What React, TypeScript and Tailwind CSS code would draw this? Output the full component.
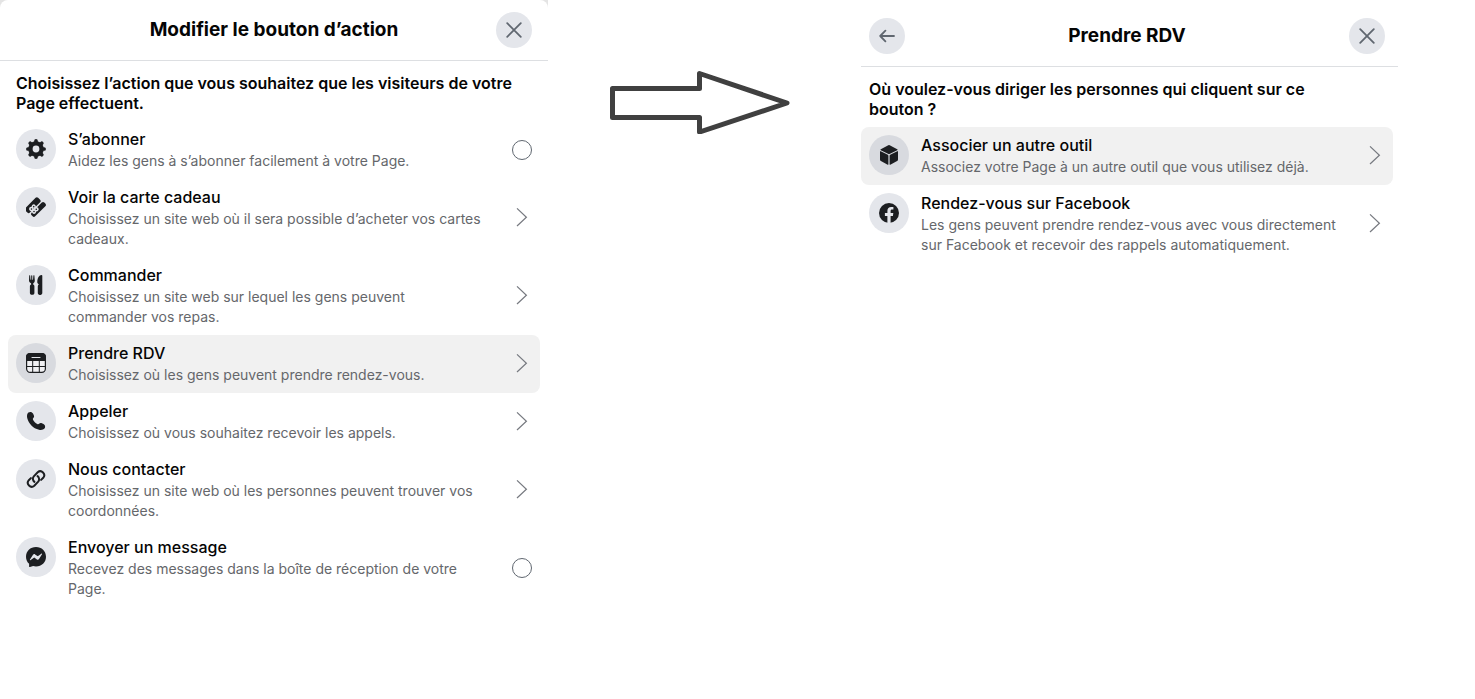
import { useState, type ReactNode } from "react";

type Item = {
  title: string;
  text: string;
  icon: ReactNode;
  kind: "radio" | "link";
  active?: boolean;
};

const GearIcon = () => (
  <svg width="20" height="20" viewBox="0 0 20 20" fill="none" stroke="currentColor" aria-hidden="true">
    <circle cx="10" cy="10" r="5.6" strokeWidth="4.4" />
    <path
      d="M10 1.9v2M10 16.1v2M1.9 10h2M16.1 10h2M4.2 4.2l1.4 1.4M14.4 14.4l1.4 1.4M4.2 15.8l1.4-1.4M14.4 5.6l1.4-1.4"
      strokeWidth="3.7"
      strokeLinecap="round"
    />
  </svg>
);

const GiftCardIcon = () => (
  <svg width="20" height="20" viewBox="0 0 20 20" aria-hidden="true">
    <g transform="rotate(-45 10 10)" fill="currentColor">
      <rect x="0" y="3.2" width="18" height="6.4" rx="1.8" />
      <rect x="1" y="11" width="18" height="5" rx="1.8" />
      <g className="fill-[#e4e6eb]">
        <circle cx="5.2" cy="8" r="2.1" />
        <circle cx="8.8" cy="8" r="2.1" />
        <circle cx="5.2" cy="12" r="2.1" />
        <circle cx="8.8" cy="12" r="2.1" />
      </g>
      <circle cx="5.4" cy="8.2" r=".8" />
      <circle cx="8.6" cy="8.2" r=".8" />
      <circle cx="5.4" cy="11.8" r=".8" />
      <circle cx="8.6" cy="11.8" r=".8" />
    </g>
  </svg>
);

const CutleryIcon = () => (
  <svg width="20" height="20" viewBox="0 0 20 20" fill="currentColor" aria-hidden="true">
    <path d="M3.2.8c0-.6 1-.6 1 0l.3 3.9h.7V.7c0-.7 1.1-.7 1.1 0v4H7L7.4.8c0-.6 1-.6 1 0l.4 4.7c0 1.5-.7 2.2-1.5 2.7l-.2 1.2c1 .4 1.3 1 1.3 1.9v6.6c0 1.1-.8 1.9-1.9 1.9h-.7c-1.1 0-1.9-.8-1.9-1.9v-6.6c0-.9.4-1.5 1.3-1.9L5 8.2C4 7.7 3.1 7 3 5.5z" />
    <path d="M15.6 0c.4 0 .7.3.7.7v17.4c0 1.1-.8 1.9-1.9 1.9h-.7c-1.1 0-1.9-.8-1.9-1.9v-6.6c0-.8.3-1.5 1-1.9l-.9-1c-.5-.5-.6-1-.6-1.7C11.4 3 13.1 0 15.6 0z" />
  </svg>
);

const CalendarIcon = () => (
  <svg width="20" height="20" viewBox="0 0 20 20" fill="none" aria-hidden="true">
    <rect x=".6" y=".6" width="18.8" height="18.8" rx="3.6" className="fill-[#f0f0f3]" stroke="currentColor" strokeWidth="1.2" />
    <path d="M4 0h12a4 4 0 0 1 4 4v4H0V4a4 4 0 0 1 4-4z" fill="currentColor" />
    <path d="M6 4.5h8" className="stroke-[#e4e6eb]" strokeWidth="1.1" strokeLinecap="round" />
    <path d="M6.7 8v11.5M13.3 8v11.5M.5 13.5h19" stroke="currentColor" strokeWidth="1" />
  </svg>
);

const PhoneIcon = () => (
  <svg width="20" height="20" viewBox="0 0 20 20" fill="currentColor" aria-hidden="true">
    <path d="M2.4 1.6C3.9.6 6 .7 7 2.6l.8 1.6c.6 1.3.2 2.1-.5 2.8-.5.6-.6 1.1-.3 1.8.9 1.8 2.5 3.3 4.3 4.2.7.3 1.2.2 1.8-.3.7-.7 1.5-1.1 2.8-.5l1.6.8c1.9 1 2 3.1 1 4.6-1 1.3-3.3 1.7-5.5 1.2C7.2 17.4 2.6 12.6 1.2 7 .7 4.9 1.1 2.6 2.4 1.6z" />
  </svg>
);

const LinkIcon = () => (
  <svg width="20" height="20" viewBox="0 0 20 20" fill="none" stroke="currentColor" strokeWidth="2" strokeLinecap="round" aria-hidden="true">
    <path d="M8.4 12.9a3.9 3.9 0 0 1-.6-5.6l3.9-4a3.9 3.9 0 0 1 5.5 5.5l-2.1 2.1" />
    <path d="M11.6 7.1a3.9 3.9 0 0 1 .6 5.6l-3.9 4a3.9 3.9 0 0 1-5.5-5.5l2.1-2.1" />
  </svg>
);

const MessengerIcon = () => (
  <svg width="20" height="20" viewBox="0 0 20 20" aria-hidden="true">
    <path d="M10 0c5.7 0 10 4.1 10 9.7s-4.3 9.7-10 9.7c-1 0-2-.1-2.9-.4l-3.1 1c-.5.2-.9-.1-.9-.6v-2.6C1.2 15.1 0 12.6 0 9.7 0 4.1 4.3 0 10 0z" fill="currentColor" />
    <path d="M4 12.5l3-4.7c.5-.7 1.4-.9 2.1-.4l2.3 1.7c.2.2.5.2.7 0l3.2-2.4c.4-.3 1 .2.7.6l-3 4.7c-.4.7-1.4.9-2.1.4l-2.3-1.7a.6.6 0 0 0-.7 0l-3.2 2.4c-.4.3-1-.2-.7-.6z" className="fill-[#e4e6eb]" />
  </svg>
);

const CubeIcon = () => (
  <svg width="20" height="20" viewBox="0 0 20 20" fill="currentColor" aria-hidden="true">
    <path d="M9.3.3a1.5 1.5 0 0 1 1.4 0l7.5 3.9c.5.3.5.7 0 1L10.5 9c-.3.2-.7.2-1 0L1.8 5.2c-.5-.3-.5-.7 0-1z" />
    <path d="M1 6.6c0-.4.3-.5.7-.3l7.1 3.5c.4.2.6.5.6.9v8.5c0 .5-.3.7-.7.5l-6.8-3.6c-.6-.3-.9-.8-.9-1.5z" />
    <path d="M19 6.6c0-.4-.3-.5-.7-.3l-7.1 3.5c-.4.2-.6.5-.6.9v8.5c0 .5.3.7.7.5l6.8-3.6c.6-.3.9-.8.9-1.5z" />
  </svg>
);

const FacebookIcon = () => (
  <svg width="20" height="20" viewBox="0 0 20 20" aria-hidden="true">
    <circle cx="10" cy="10" r="10" fill="currentColor" />
    <path d="M8.4 20v-7.1H5.9V10h2.5V7.8c0-2.5 1.5-3.9 3.8-3.9 1.1 0 2.2.2 2.2.2v2.5h-1.2c-1.3 0-1.6.7-1.6 1.5V10h2.7l-.4 2.9h-2.3V20z" className="fill-[#e4e6eb]" />
  </svg>
);

const CloseIcon = () => (
  <svg width="16" height="16" viewBox="0 0 16 16" fill="none" stroke="currentColor" strokeWidth="1.8" strokeLinecap="round" aria-hidden="true">
    <path d="M1.2 1.2l13.6 13.6M14.8 1.2L1.2 14.8" />
  </svg>
);

const BackIcon = () => (
  <svg width="16" height="16" viewBox="0 0 16 16" fill="none" stroke="currentColor" strokeWidth="1.8" strokeLinecap="round" strokeLinejoin="round" aria-hidden="true">
    <path d="M6.4 2.7L1.2 8l5.2 5.3M1.2 8h13.8" />
  </svg>
);

const Chevron = () => (
  <svg width="20" height="20" viewBox="0 0 20 20" fill="none" stroke="currentColor" strokeWidth="1.2" className="shrink-0 text-[#777a80]" aria-hidden="true">
    <path d="M5 .4l9.4 8.8L5 18" />
  </svg>
);

const actions: Item[] = [
  { title: "S’abonner", text: "Aidez les gens à s’abonner facilement à votre Page.", icon: <GearIcon />, kind: "radio" },
  { title: "Voir la carte cadeau", text: "Choisissez un site web où il sera possible d’acheter vos cartes cadeaux.", icon: <GiftCardIcon />, kind: "link" },
  { title: "Commander", text: "Choisissez un site web sur lequel les gens peuvent commander vos repas.", icon: <CutleryIcon />, kind: "link" },
  { title: "Prendre RDV", text: "Choisissez où les gens peuvent prendre rendez-vous.", icon: <CalendarIcon />, kind: "link", active: true },
  { title: "Appeler", text: "Choisissez où vous souhaitez recevoir les appels.", icon: <PhoneIcon />, kind: "link" },
  { title: "Nous contacter", text: "Choisissez un site web où les personnes peuvent trouver vos coordonnées.", icon: <LinkIcon />, kind: "link" },
  { title: "Envoyer un message", text: "Recevez des messages dans la boîte de réception de votre Page.", icon: <MessengerIcon />, kind: "radio" },
];

const tools: Item[] = [
  { title: "Associer un autre outil", text: "Associez votre Page à un autre outil que vous utilisez déjà.", icon: <CubeIcon />, kind: "link", active: true },
  { title: "Rendez-vous sur Facebook", text: "Les gens peuvent prendre rendez-vous avec vous directement sur Facebook et recevoir des rappels automatiquement.", icon: <FacebookIcon />, kind: "link" },
];

function RoundButton({ label, children }: { label: string; children: ReactNode }) {
  return (
    <button
      type="button"
      aria-label={label}
      className="flex size-9 shrink-0 items-center justify-center rounded-full bg-[#e4e6eb] text-[#606770]"
    >
      {children}
    </button>
  );
}

function ItemBody({ item }: { item: Item }) {
  return (
    <>
      <span
        className={`flex size-10 shrink-0 items-center justify-center self-start rounded-full text-[#1c1e21] ${
          item.active ? "bg-[#d8dadf]" : "bg-[#e4e6eb]"
        }`}
      >
        {item.icon}
      </span>
      <span className="flex min-w-0 flex-1 flex-col gap-0.5 pr-4">
        <span className="text-base leading-5 font-medium text-[#050505]">{item.title}</span>
        <span className="text-sm leading-5 text-[#65676b]">{item.text}</span>
      </span>
    </>
  );
}

function ItemList({ items }: { items: Item[] }) {
  const [selected, setSelected] = useState("");

  return (
    <ul>
      {items.map((item) => (
        <li key={item.title}>
          {item.kind === "radio" ? (
            <label className="flex w-full cursor-pointer items-center gap-3 rounded-lg p-2">
              <ItemBody item={item} />
              <input
                type="radio"
                name="action"
                checked={selected === item.title}
                onChange={() => setSelected(item.title)}
                className="size-5 shrink-0 appearance-none rounded-full border border-[#606770] checked:border-[6px] checked:border-blue-600"
              />
            </label>
          ) : (
            <button
              type="button"
              className={`flex w-full items-center gap-3 rounded-lg p-2 text-left ${item.active ? "bg-[#f1f1f1]" : ""}`}
            >
              <ItemBody item={item} />
              <Chevron />
            </button>
          )}
        </li>
      ))}
    </ul>
  );
}

export default function App() {
  return (
    <main className="grid min-h-screen grid-cols-[548fr_313fr_537fr_77fr] items-start bg-white font-['Inter','Liberation_Sans',sans-serif]">
      <div className="bg-[#e4e4e4]">
        <section className="rounded-t-lg bg-white">
          <header className="flex items-center border-b border-[#dddfe2] px-4 py-3">
            <h1 className="flex-1 pl-9 text-center text-[19px] leading-6 font-bold text-[#050505]">
              Modifier le bouton d’action
            </h1>
            <RoundButton label="Fermer">
              <CloseIcon />
            </RoundButton>
          </header>
          <div className="px-2 pt-3">
            <h2 className="pr-6 pb-2 pl-2 text-base leading-5 font-semibold text-[#050505]">
              Choisissez l’action que vous souhaitez que les visiteurs de votre Page effectuent.
            </h2>
            <ItemList items={actions} />
          </div>
        </section>
      </div>

      <div className="flex justify-center pt-[70px] pr-2.5">
        <svg width="180" height="64" viewBox="0 0 180 64" fill="none" stroke="#404040" strokeWidth="5" strokeLinejoin="round" aria-hidden="true">
          <path d="M2.5 18.5H89.5V3.5L177 33 89.5 62V47.5H2.5z" />
        </svg>
      </div>

      <section className="pt-1.5">
        <header className="flex items-center border-b border-[#dddfe2] py-3 pr-[13px] pl-2">
          <RoundButton label="Retour">
            <BackIcon />
          </RoundButton>
          <h1 className="flex-1 text-center text-[19px] leading-6 font-bold text-[#050505]">Prendre RDV</h1>
          <RoundButton label="Fermer">
            <CloseIcon />
          </RoundButton>
        </header>
        <div className="pt-3 pr-[5px]">
          <h2 className="pr-6 pb-2 pl-2 text-base leading-5 font-semibold text-[#050505]">
            Où voulez-vous diriger les personnes qui cliquent sur ce bouton&nbsp;?
          </h2>
          <ItemList items={tools} />
        </div>
      </section>
    </main>
  );
}
